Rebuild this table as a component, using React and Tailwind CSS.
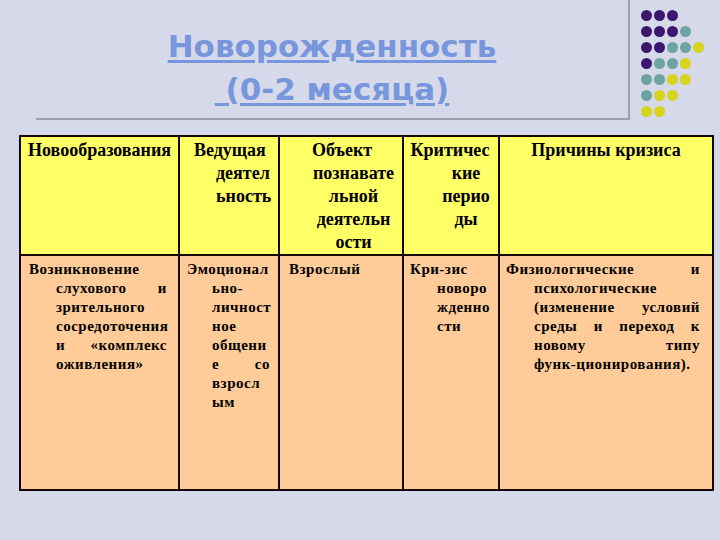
const P = '#3c1770';
const T = '#6ea3a3';
const Y = '#d6d41c';

const dotRows = [
  [P, P, P, null, null],
  [P, P, P, T, null],
  [P, P, T, T, Y],
  [P, T, T, Y, null],
  [T, T, Y, Y, null],
  [T, Y, Y, null, null],
  [Y, Y, null, null, null],
];

function Dots() {
  return (
    <div className="grid grid-cols-5 gap-[2px] pt-[10px] ml-[11px]">
      {dotRows.flat().map((c, i) =>
        c ? (
          <div key={i} className="w-[11px] h-[11px] rounded-full" style={{ backgroundColor: c }} />
        ) : (
          <div key={i} className="w-[11px] h-[11px]" />
        )
      )}
    </div>
  );
}

// a line is either a string or an array of words spread to both edges
function Line({ line, first, outdent, center }) {
  const words = Array.isArray(line) ? line : null;
  const cls = first ? outdent : '';
  if (words) {
    return (
      <div className={`flex justify-between ${cls}`}>
        {words.map((w, i) => (
          <span key={i}>{w}</span>
        ))}
      </div>
    );
  }
  return <div className={`${center ? 'text-center' : ''} ${cls} whitespace-nowrap`}>{line}</div>;
}

function Cell({ lines, pad, outdent = '', center = false, head = false }) {
  return (
    <td
      className={`align-top border-2 border-[#150707] ${pad} ${
        head ? 'pt-[2px] leading-[23px] text-[18px]' : 'pt-[4px] leading-[19px] text-[15px] tracking-[0.5px]'
      }`}
    >
      {lines.map((l, i) => (
        <Line key={i} line={l} first={i === 0} outdent={outdent} center={center} />
      ))}
    </td>
  );
}

export default function App() {
  return (
    <div className="w-[720px] h-[540px] bg-[#d5d9ea] overflow-hidden">
      <div className="flex">
        <div className="ml-[36px] w-[594px] h-[120px] border-r-2 border-b-2 border-[#9aa0b2] pt-[25px] text-center font-['DejaVu_Sans',sans-serif] font-bold text-[31px] leading-[43px] text-[#7896dc]">
          <div>
            <span className="underline decoration-[3px] underline-offset-[3px]">Новорожденность</span>
          </div>
          <div>
            <span className="underline decoration-[3px] underline-offset-[3px] whitespace-pre"> (0-2 месяца)</span>
          </div>
        </div>
        <Dots />
      </div>

      <table className="ml-[19px] mt-[15px] w-[693px] border-collapse table-fixed font-['Liberation_Serif',serif] font-bold text-black">
        <colgroup>
          <col className="w-[159px]" />
          <col className="w-[100px]" />
          <col className="w-[124px]" />
          <col className="w-[96px]" />
          <col className="w-[214px]" />
        </colgroup>
        <tbody>
          <tr className="h-[119px] bg-[#ffff66]">
            <Cell head pad="pl-[7px] pr-[2px]" lines={['Новообразования']} />
            <Cell head pad="pl-[36px] pr-[4px]" outdent="-ml-[22px]" lines={['Ведущая', 'деятел', 'ьность']} />
            <Cell
              head
              center
              pad="pl-[33px] pr-[8px]"
              outdent="-ml-[23px]"
              lines={['Объект', 'познавате', 'льной', 'деятельн', 'ости']}
            />
            <Cell head center pad="pl-[38px] pr-[8px]" outdent="-ml-[32px]" lines={['Критичес', 'кие', 'перио', 'ды']} />
            <Cell head center pad="px-[8px]" lines={['Причины кризиса']} />
          </tr>
          <tr className="h-[235px] bg-[#ffcc99]">
            <Cell
              pad="pl-[35px] pr-[11px]"
              outdent="-ml-[27px]"
              lines={[
                'Возникновение',
                ['слухового', 'и'],
                'зрительного',
                'сосредоточения',
                ['и', '«комплекс'],
                'оживления»',
              ]}
            />
            <Cell
              pad="pl-[32px] pr-[8px]"
              outdent="-ml-[25px]"
              lines={['Эмоционал', 'ьно-', 'личност', 'ное', 'общени', ['е', 'со'], 'взросл', 'ым']}
            />
            <Cell pad="pl-[9px] pr-[4px]" lines={['Взрослый']} />
            <Cell
              pad="pl-[33px] pr-[10px]"
              outdent="-ml-[27px]"
              lines={['Кри-зис', 'новоро', 'жденно', 'сти']}
            />
            <Cell
              pad="pl-[34px] pr-[12px]"
              outdent="-ml-[28px]"
              lines={[
                ['Физиологические', 'и'],
                'психологические',
                ['(изменение', 'условий'],
                ['среды', 'и', 'переход', 'к'],
                ['новому', 'типу'],
                'функ-ционирования).',
              ]}
            />
          </tr>
        </tbody>
      </table>
    </div>
  );
}
